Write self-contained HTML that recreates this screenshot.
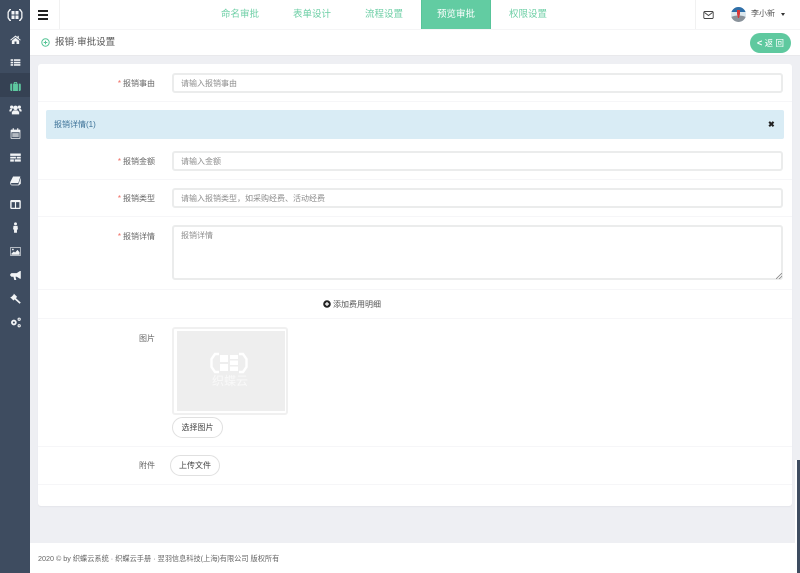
<!DOCTYPE html>
<html lang="zh"><head><meta charset="utf-8"><title>报销·审批设置</title>
<style>
*{box-sizing:border-box}
html,body{margin:0;padding:0;width:800px;height:573px;overflow:hidden;background:#fff}
body{font-family:"Liberation Sans","Noto Sans CJK SC",sans-serif;font-size:8px;color:#676a6c;position:relative;filter:blur(.3px)}
.a{position:absolute}
#side{left:0;top:0;width:30px;height:573px;background:#3e4c60}
#side svg{position:absolute;left:8.500px;width:13px;height:13px;margin-top:-.5px;fill:#f2f4f6}
#act{left:0;top:73px;width:30px;height:24px;background:#354153}
.tab{top:0;height:29px;line-height:29px;text-align:center;font-size:9.5px;color:#6ecfa6;width:70px}
.line{left:38px;width:754px;height:1px;background:#f6f6f8}
.lab{text-align:right;width:80px;left:75px;font-size:8px;color:#666;line-height:12px}
.lab i{color:#f06a60;font-style:normal;margin-right:2px}
.inp{left:172px;width:611px;border:2px solid #ebecec;border-radius:3px;background:#fff;font-size:8px;color:#8d8d8d;padding-left:7px}
.btn{border:1px solid #e0e0e0;border-radius:11px;background:#fff;color:#444;font-size:8px;text-align:center}
</style></head><body>
<div class="a" style="left:30px;top:56px;width:765px;height:487px;background:#eeeff3"></div>
<div class="a" style="left:795px;top:56px;width:5px;height:404px;background:#eeeff3"></div>

<div class="a" id="side">
<svg style="top:6px;left:6px;width:18px;height:18px;margin:0" viewBox="0 0 18 18"><path d="M5 3H3.500L1.500 6V12L3.500 15H5V13.800H4.300L2.800 11.500V6.500L4.300 4.200H5ZM13 3H14.500L16.500 6V12L14.500 15H13V13.800H13.700L15.200 11.500V6.500L13.700 4.200H13ZM5.500 5H8.500V8.500H5.500ZM9.500 5H12.500V8.500H9.500ZM5.500 9.500H8.500V13H5.500ZM9.500 9.500H12.500V13H9.500Z"/></svg>
<svg style="top:33px" viewBox="0 0 16 16"><path d="M8 3L1.500 8.500 2.300 9.300 8 4.700 13.700 9.300 14.500 8.500 12 6.400V3.500H10.500V5.100ZM3.500 9.500V13.500H6.800V10.500H9.200V13.500H12.500V9.500L8 5.800Z"/></svg>
<svg style="top:56px" viewBox="0 0 16 16"><path d="M2 4H5V6H2ZM6 4H14V6H6ZM2 7H5V9H2ZM6 7H14V9H6ZM2 10H5V12H2ZM6 10H14V12H6Z"/></svg>
<div class="a" id="act"></div>
<svg style="top:80px;fill:#5ec9a0" viewBox="0 0 16 16"><path d="M6 2.500H10V4.500H9V3.500H7V4.500H6ZM2 4.500H4V13.500H2.500L1.500 12.500V5.500ZM5 4.500H11V13.500H5ZM12 4.500H14L14.500 5.500V12.500L13.500 13.500H12Z"/></svg>
<svg style="top:103px" viewBox="0 0 16 16"><circle cx="8" cy="6" r="2.800"/><circle cx="3.300" cy="5" r="2"/><circle cx="12.700" cy="5" r="2"/><path d="M3.500 14V11L5.500 9H10.500L12.500 11V14ZM.5 10.500V8.500L2 7.300H4L2.800 10.500ZM15.500 10.500V8.500L14 7.300H12L13.200 10.500Z"/></svg>
<svg style="top:127px" viewBox="0 0 16 16"><path d="M4.500 1.500H6V3.200H10V1.500H11.500V3.200H13.500L14 4V14L13.500 14.500H2.500L2 14V4L2.500 3.200H4.500ZM3 6.500V13.500H13V6.500Z"/><path d="M4 7.500H12V12.500H4Z" opacity=".65"/></svg>
<svg style="top:151px" viewBox="0 0 16 16"><path d="M1.500 3H14.500V6H1.500ZM1.500 7H8.500V9.300H1.500ZM9.500 7H14.500V9.300H9.500ZM1.500 10.300H6V13H1.500ZM7 10.300H14.500V13H7Z"/></svg>
<svg style="top:174px" viewBox="0 0 16 16"><path d="M5 3H14L11.500 11H3L2.200 12.200 3 13H11.500L14.500 4.500V12L12 14H3L1.500 12.500V10Z"/></svg>
<svg style="top:198px" viewBox="0 0 16 16"><path fill-rule="evenodd" d="M2.500 2.500H13.500L14.500 3.500V12.500L13.500 13.500H2.500L1.500 12.500V3.500ZM3.200 5V12H7.300V5ZM8.700 5V12H12.800V5Z"/></svg>
<svg style="top:221px" viewBox="0 0 16 16"><circle cx="8" cy="3.500" r="1.800"/><path d="M5.500 6H10.500L11 10.500H9.800V14.500H6.200V10.500H5Z"/></svg>
<svg style="top:245px" viewBox="0 0 16 16"><path fill-rule="evenodd" d="M1.500 2.500H14.500V13.500H1.500ZM2.500 3.500V12.500H13.500V3.500Z" opacity=".75"/><path d="M3 12V10.500L6 8 7.500 9.300 10.500 6 13 9V12Z"/><circle cx="4.800" cy="5.500" r="1.100"/></svg>
<svg style="top:269px" viewBox="0 0 16 16"><path d="M13.500 2.500H14.500V12H13.500L9.500 9.500H8L9 13.500H6.500L5.500 9.500H3L1.500 8V6.500L3 5H9.500Z"/></svg>
<svg style="top:292px" viewBox="0 0 16 16"><path d="M6 2L10 6 8.500 7.500 14.500 13 13 14.500 7 9 5.500 10.500 1.500 6.500 3 6 5.500 3.500Z"/></svg>
<svg style="top:316px" viewBox="0 0 16 16"><path fill-rule="evenodd" d="M6 4.500A3.500 3.500 0 1 0 6 11.500 3.500 3.500 0 1 0 6 4.500ZM6 6.700A1.300 1.300 0 1 1 6 9.300 1.300 1.300 0 1 1 6 6.700Z"/><path fill-rule="evenodd" d="M12.500 2A2 2 0 1 0 12.500 6 2 2 0 1 0 12.500 2ZM12.500 3.300A.7.700 0 1 1 12.500 4.700 .7.700 0 1 1 12.500 3.300ZM12.500 10A2 2 0 1 0 12.500 14 2 2 0 1 0 12.500 10ZM12.500 11.300A.7.700 0 1 1 12.500 12.700 .7.700 0 1 1 12.500 11.300Z"/></svg>
</div>

<!-- top bar -->
<div class="a" style="left:59px;top:0;width:1px;height:29px;background:#f1f1f1"></div>
<div class="a" style="left:695px;top:0;width:1px;height:29px;background:#f1f1f1"></div>
<div class="a" style="left:38px;top:10px;width:10px;height:2px;background:#222"></div>
<div class="a" style="left:38px;top:14px;width:10px;height:2px;background:#222"></div>
<div class="a" style="left:38px;top:18px;width:10px;height:2px;background:#222"></div>
<div class="a" style="left:30px;top:29px;width:770px;height:1px;background:#f5f5f6"></div>
<div class="a tab" style="left:205px">命名审批</div>
<div class="a tab" style="left:277px">表单设计</div>
<div class="a tab" style="left:349px">流程设置</div>
<div class="a tab" style="left:421px;width:70px;background:#62cca2;color:#fff;border:1px solid #58c49a;border-top:none;border-bottom:none">预览审批</div>
<div class="a tab" style="left:493px">权限设置</div>
<svg class="a" style="left:703px;top:10px" width="11" height="10" viewBox="0 0 11 10"><path d="M1.500 1.500H9.500L10.200 2.200V7.800L9.500 8.500H1.500L.8 7.800V2.200ZM1.500 2.500L5.500 5.500 9.500 2.500" fill="none" stroke="#444" stroke-width=".9"/></svg>
<svg class="a" style="left:731px;top:7px" width="15" height="15" viewBox="0 0 15 15"><defs><clipPath id="c"><circle cx="7.500" cy="7.500" r="7.500"/></clipPath></defs><g clip-path="url(#c)"><rect width="15" height="15" fill="#dbe7ee"/><rect width="15" height="5" fill="#2f6fa8"/><path d="M0 10C4 8 11 8 15 10V15H0Z" fill="#8a929a"/><path d="M6 3H9V7L8 11H7L6 7Z" fill="#d8383a"/></g></svg>
<div class="a" style="left:751px;top:8px;font-size:8px;line-height:12px;color:#555">李小新</div>
<div class="a" style="left:781px;top:13px;border:2.500px solid transparent;border-top:3px solid #333;border-bottom:0"></div>

<!-- page heading -->
<svg class="a" style="left:41px;top:38px" width="9" height="9" viewBox="0 0 9 9"><circle cx="4.500" cy="4.500" r="3.700" fill="none" stroke="#56c596" stroke-width="1"/><path d="M2.700 4.500H6.300M4.500 2.700V6.300" stroke="#56c596" stroke-width="1"/></svg>
<div class="a" style="left:55px;top:36px;font-size:9.500px;line-height:13px;color:#555">报销·审批设置</div>
<div class="a" style="left:750px;top:33px;width:41px;height:20px;border-radius:10px;background:#5fc99f;color:#fff;font-size:8.500px;line-height:20px;text-align:center"><b style="font-size:9px">&lt;</b> 返 回</div>
<div class="a" style="left:30px;top:55px;width:770px;height:1px;background:#e9e9ec"></div>

<!-- card -->
<div class="a" style="left:38px;top:64px;width:754px;height:442px;background:#fff;border-radius:3px;box-shadow:0 1px 1px #e4e5ea"></div>
<div class="a lab" style="top:78px"><i>*</i>报销事由</div>
<div class="a inp" style="top:73px;height:20px;line-height:17px">请输入报销事由</div>
<div class="a line" style="top:101px"></div>
<div class="a" style="left:46px;top:110px;width:738px;height:29px;background:#d9ecf5;border-radius:2px;color:#3b7197;font-size:8px;line-height:29px;padding-left:8px">报销详情(1)</div>
<div class="a" style="left:768px;top:119px;font-size:8px;line-height:12px;font-weight:bold;color:#222">&#10006;</div>
<div class="a lab" style="top:156px"><i>*</i>报销金额</div>
<div class="a inp" style="top:151px;height:20px;line-height:17px">请输入金额</div>
<div class="a line" style="top:179px"></div>
<div class="a lab" style="top:193px"><i>*</i>报销类型</div>
<div class="a inp" style="top:188px;height:20px;line-height:17px">请输入报销类型，如采购经费、活动经费</div>
<div class="a line" style="top:216px"></div>
<div class="a lab" style="top:231px"><i>*</i>报销详情</div>
<div class="a inp" style="top:225px;height:55px;line-height:18px">报销详情</div>
<svg class="a" style="left:776px;top:273px" width="6" height="6" viewBox="0 0 6 6"><path d="M0 6L6 0M3 6L6 3" stroke="#888" stroke-width=".8"/></svg>
<div class="a line" style="top:289px"></div>
<svg class="a" style="left:323px;top:300px" width="8" height="8" viewBox="0 0 8 8"><circle cx="4" cy="4" r="3.800" fill="#222"/><path d="M2 4H6M4 2V6" stroke="#fff" stroke-width="1.200"/></svg>
<div class="a" style="left:333px;top:299px;font-size:8px;line-height:12px;color:#555">添加费用明细</div>
<div class="a line" style="top:318px"></div>
<div class="a lab" style="top:333px">图片</div>
<div class="a" style="left:172px;top:327px;width:116px;height:88px;border:2px solid #f0f0f0;border-radius:3px;background:#fff"></div>
<div class="a" style="left:177px;top:331px;width:108px;height:80px;background:#eeeeee"></div>
<svg class="a" style="left:209px;top:352px" width="40" height="22" viewBox="0 0 40 22"><path d="M10 2H6L2.500 7V15L6 20H10M30 2H34L37.500 7V15L34 20H30" fill="none" stroke="#fff" stroke-width="2.400"/><path d="M11 3H19V10H11ZM21 3H29V7H21ZM21 8.500H29V13H21ZM11 12H19V19H11ZM21 14.500H29V19H21Z" fill="#fff"/></svg>
<div class="a" style="left:212px;top:374px;width:40px;font-size:12px;line-height:14px;color:#f9f9f9;white-space:nowrap">织蝶云</div>
<div class="a btn" style="left:172px;top:417px;width:51px;height:21px;line-height:19px">选择图片</div>
<div class="a line" style="top:446px"></div>
<div class="a lab" style="top:460px">附件</div>
<div class="a btn" style="left:170px;top:455px;width:50px;height:21px;line-height:19px">上传文件</div>
<div class="a line" style="top:484px"></div>

<!-- footer -->
<div class="a" style="left:38px;top:553px;font-size:7.200px;line-height:11px;color:#666;white-space:nowrap">2020 © by 织蝶云系统 · 织蝶云手册 · 翌羽信息科技(上海)有限公司 版权所有</div>
<div class="a" style="left:797px;top:460px;width:3px;height:113px;background:#3e4c60"></div>
</body></html>
